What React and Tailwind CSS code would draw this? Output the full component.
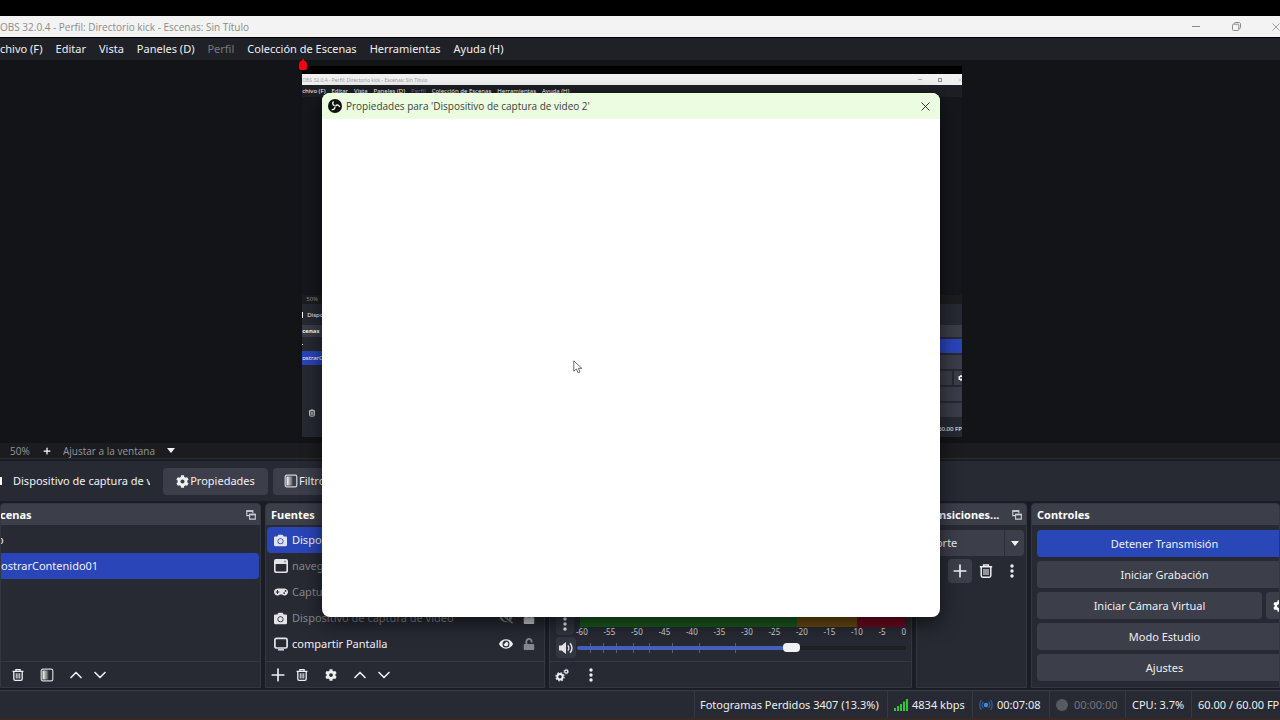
import React, { useState } from "react";
import { FaCamera, FaCog, FaEye, FaEyeSlash, FaGamepad, FaLock, FaUnlock } from "react-icons/fa";
import { ChevronDown, ChevronUp, Plus } from "lucide-react";

const MENU = ["chivo (F)", "Editar", "Vista", "Paneles (D)", "Perfil", "Colección de Escenas", "Herramientas", "Ayuda (H)"];
const DB_MARKS = [-60, -55, -50, -45, -40, -35, -30, -25, -20, -15, -10, -5, 0];
// slider notches, in percent of the track
const NOTCHES = [4, 8, 12, 17, 22, 29, 37, 48];

function TrashIcon({ className = "size-4" }) {
  return (
    <svg viewBox="0 0 16 16" className={className} fill="none" stroke="currentColor" strokeWidth="1.5">
      <path d="M1.8 3.8h12.4M5.6 3.5V1.9h4.8v1.6M3.2 4v8.6c0 1 .6 1.6 1.6 1.6h6.4c1 0 1.6-.6 1.6-1.6V4" />
      <path d="M6 6v6M8 6v6M10 6v6" strokeWidth="1.1" />
    </svg>
  );
}

function FilterIcon({ className = "size-3.5" }) {
  return (
    <svg viewBox="0 0 14 14" className={className}>
      <defs>
        <linearGradient id="fade" x1="0" x2="1">
          <stop offset="0" stopColor="#fff" />
          <stop offset="1" stopColor="#fff" stopOpacity="0.15" />
        </linearGradient>
      </defs>
      <rect x="1.2" y="1.2" width="11.6" height="11.6" rx="1.6" fill="none" stroke="#d4d5da" strokeWidth="1.2" />
      <rect x="2.5" y="2.5" width="6" height="9" fill="url(#fade)" />
    </svg>
  );
}

function DotsIcon() {
  return (
    <svg viewBox="0 0 4 14" className="h-3.5 w-1" fill="currentColor">
      <circle cx="2" cy="2" r="1.7" />
      <circle cx="2" cy="7" r="1.7" />
      <circle cx="2" cy="12" r="1.7" />
    </svg>
  );
}

function PopOutIcon() {
  return (
    <svg viewBox="0 0 10 10" className="size-2.5" fill="none" stroke="#cfd0d6">
      <path d="M3.2 5.6H.8V.8h6v2.4" strokeWidth="1.1" />
      <path d="M.5 1.1h6.6" strokeWidth="1.6" />
      <path d="M3.6 4.2h5.7v4.9H3.6z" strokeWidth="1.1" />
      <path d="M3.2 4.6h6.4" strokeWidth="1.6" />
    </svg>
  );
}

function WindowIcon() {
  return (
    <svg viewBox="0 0 14 14" className="size-3.5">
      <path d="M2 0h10a2 2 0 0 1 2 2v10a2 2 0 0 1-2 2H2a2 2 0 0 1-2-2V2a2 2 0 0 1 2-2zm-.4 5v6.6c0 .5.3.8.8.8h9.2c.5 0 .8-.3.8-.8V5z" fill="currentColor" fillRule="evenodd" />
      <circle cx="11" cy="2.6" r="1" fill="#8a8c95" />
    </svg>
  );
}

function MonitorIcon() {
  return (
    <svg viewBox="0 0 14 14" className="size-3.5" fill="none" stroke="currentColor">
      <rect x="0.9" y="1.4" width="12.2" height="9.6" rx="1.6" strokeWidth="1.7" />
      <path d="M4 12.8h6" strokeWidth="1.4" />
    </svg>
  );
}

function CogsIcon() {
  return (
    <svg viewBox="0 0 14 14" className="size-3.5" fill="none" stroke="currentColor">
      <circle cx="5" cy="8.8" r="2.7" strokeWidth="2" />
      <circle cx="5" cy="8.8" r="4.1" strokeWidth="1.2" strokeDasharray="1.6 1.62" />
      <circle cx="11.2" cy="3.6" r="1.5" strokeWidth="1.2" />
      <circle cx="11.2" cy="3.6" r="2.4" strokeWidth="0.8" strokeDasharray="1 0.9" />
    </svg>
  );
}

function SpeakerIcon() {
  return (
    <svg viewBox="0 0 16 14" className="h-3.5 w-4" fill="none" stroke="currentColor">
      <path d="M1 4.6h2.6L8 1v12L3.6 9.4H1z" fill="currentColor" stroke="none" />
      <path d="M9.8 4.4c1.3 1.4 1.3 3.8 0 5.2M12 2.2c2.6 2.6 2.6 7 0 9.6" strokeWidth="1.5" />
    </svg>
  );
}

function ObsLogo() {
  return (
    <svg viewBox="0 0 24 24" className="size-3.5">
      <circle cx="12" cy="12" r="12" fill="#111" />
      <g fill="none" stroke="#e8ffe0" strokeWidth="2.4">
        <path d="M9.6 4.2c-2.400 2.200-2 6 1.800 7.200" />
        <path d="M9.6 4.2c-2.400 2.200-2 6 1.800 7.200" transform="rotate(120 12 12)" />
        <path d="M9.6 4.2c-2.400 2.200-2 6 1.800 7.200" transform="rotate(240 12 12)" />
      </g>
    </svg>
  );
}

function CloseIcon({ className }) {
  return (
    <svg viewBox="0 0 10 10" className={className} fill="none" stroke="currentColor">
      <path d="M.6.6l8.8 8.8M9.4.6L.6 9.4" />
    </svg>
  );
}

function Caret() {
  return (
    <svg viewBox="0 0 8 5" className="h-[5px] w-2" fill="#f2f2f4">
      <path d="M0 0h8L4 5z" />
    </svg>
  );
}

function TitleBar() {
  return (
    <div className="flex h-[21px] shrink-0 items-center justify-between overflow-hidden bg-[#f3f3f3] font-['Open_Sans',sans-serif] text-[10px] text-[#8b8b8b]">
      <span className="whitespace-nowrap">OBS 32.0.4 - Perfil: Directorio kick - Escenas: Sin Título</span>
      <div className="-mr-4 flex">
        <button aria-label="Minimizar" className="flex h-5 w-10 items-center justify-center">
          <span className="h-px w-2 bg-[#8b8b8b]" />
        </button>
        <button aria-label="Restaurar" className="flex h-5 w-10 items-center justify-center">
          <svg viewBox="0 0 9 9" className="size-[9px]" fill="none" stroke="currentColor">
            <rect x="0.5" y="2.2" width="6.3" height="6.3" rx="1" />
            <path d="M2.3 2V1.5c0-.6.4-1 1-1h3.7c.9 0 1.5.6 1.5 1.5v3.6c0 .6-.4 1-1 1H7" />
          </svg>
        </button>
        <button aria-label="Cerrar" className="flex h-5 w-10 items-center justify-center">
          <CloseIcon className="size-2" />
        </button>
      </div>
    </div>
  );
}

// the captured screen, shown small inside the preview
function MiniScreen() {
  return (
    <div className="relative aspect-video h-full bg-[#15171c] text-[6px] leading-[8px]">
      <svg viewBox="0 0 10 12" className="absolute -top-2 -left-1 h-3 w-2.5" fill="#f00510">
        <path d="M5 0l1 2.5c2 .5 3 2 3 4.5v3q0 2-2 2H3q-2 0-2-2V7c0-2.500 1-4 3-4.500z" />
      </svg>
      <div className="flex h-full flex-col overflow-hidden">
        <div className="h-2 shrink-0 bg-black" />
        <div className="flex h-[11px] shrink-0 items-center justify-between bg-[#f0f0f0] text-[5px] text-[#a0a0a0]">
          <span>OBS 32.0.4 - Perfil: Directorio kick - Escenas: Sin Título</span>
          <div className="flex items-center gap-4">
            <span className="h-px w-1 bg-[#b0b0b0]" />
            <span className="size-1 border border-[#909090]" />
            <CloseIcon className="size-1" />
          </div>
        </div>
        <div className="flex h-3 shrink-0 items-center gap-1.5 bg-[#1d1f25] text-white">
          {MENU.map((m) => (
            <span key={m} className={m === "Perfil" ? "text-[#77797f]" : ""}>{m}</span>
          ))}
        </div>
        <div className="flex-1" />
        <div className="h-[9px] shrink-0 bg-[#1c1d20] pl-1 text-[#8c8d92]">50%</div>
        <div className="flex h-[21px] shrink-0 items-center gap-1 bg-[#262932] text-white">
          <span className="h-1.5 w-px bg-white" />
          Dispositivo
        </div>
        <div className="flex h-24 shrink-0 justify-between bg-[#20222b]">
          <div className="w-32 bg-[#262932]">
            <div className="h-3 bg-[#3a3c47] py-0.5 font-bold text-white">cenas</div>
            <div className="flex h-3.5 items-center">
              <span className="size-px bg-white" />
            </div>
            <div className="flex h-3.5 items-center bg-[#2a44b8] text-white">ostrarContenido01</div>
            <div className="mt-11 pl-1.5 text-white">
              <TrashIcon className="size-2" />
            </div>
          </div>
          <div className="flex w-32 flex-col gap-0.5 bg-[#262932]">
            <div className="h-3 bg-[#3a3c47]" />
            <div className="h-3.5 bg-[#2a44b8]" />
            <div className="h-3.5 bg-[#3a3c47]" />
            <div className="flex h-3.5 justify-end gap-0.5">
              <div className="flex-1 bg-[#3a3c47]" />
              <div className="w-2 overflow-hidden bg-[#3a3c47] py-1 pl-1 text-white">
                <FaCog className="size-1.5" />
              </div>
            </div>
            <div className="h-3.5 bg-[#3a3c47]" />
            <div className="h-3.5 bg-[#3a3c47]" />
          </div>
        </div>
        <div className="h-4 shrink-0 bg-[#262932] py-1 text-right text-white">60.00 FP</div>
      </div>
    </div>
  );
}

function Dock({ title, popOut, children, footer }) {
  return (
    <section className="flex min-w-0 flex-col overflow-hidden rounded-t-sm border border-[#343742] bg-[#272a33]">
      <header className="flex h-[21px] shrink-0 items-center justify-between bg-[#3c3e4a] pr-1 pl-[5px]">
        <h2 className="font-bold whitespace-nowrap text-white">{title}</h2>
        {popOut && (
          <button aria-label="Desacoplar panel">
            <PopOutIcon />
          </button>
        )}
      </header>
      <div className="min-h-0 flex-1">{children}</div>
      {footer && <footer className="flex h-[26px] shrink-0 items-center border-t border-[#343742] text-[#eeeef1]">{footer}</footer>}
    </section>
  );
}

function ToolButton({ label, className = "w-6", children }) {
  return (
    <button aria-label={label} className={`flex h-6 items-center justify-center rounded-sm ${className}`}>
      {children}
    </button>
  );
}

const SOURCES = [
  { name: "Dispositivo de captura de video 2", icon: <FaCamera className="size-[13px]" />, on: true, selected: true },
  { name: "navegador", icon: <WindowIcon /> },
  { name: "Captura de juego", icon: <FaGamepad className="size-3.5" /> },
  { name: "Dispositivo de captura de video", icon: <FaCamera className="size-[13px]" />, locked: true },
  { name: "compartir Pantalla", icon: <MonitorIcon />, on: true },
];

function Sources() {
  return (
    <ul className="px-px pt-0.5">
      {SOURCES.map((s) => (
        <li
          key={s.name}
          className={`flex h-[26px] items-center rounded-sm pr-2 pl-[7px] ${s.selected ? "bg-[#2a45b8]" : ""} ${s.on ? "text-[#f0f0f3]" : "text-[#85878f]"}`}
        >
          <span className="flex w-[18px] shrink-0 text-[#e4e4e8]">{s.icon}</span>
          <span className="flex-1 truncate">{s.name}</span>
          <button aria-label="Visibilidad" className="mr-2.5">
            {s.on ? <FaEye className="size-3.5" /> : <FaEyeSlash className="size-3.5" />}
          </button>
          <button aria-label="Bloquear">
            {s.locked ? <FaLock className="size-3 text-[#d0d1d6]" /> : <FaUnlock className="size-3 text-[#85878f]" />}
          </button>
        </li>
      ))}
    </ul>
  );
}

function Mixer() {
  const [volume, setVolume] = useState(66);
  return (
    <div className="flex h-full flex-col justify-end pr-[5px] pl-1.5">
      <div className="mb-px flex gap-1.5">
        <button aria-label="Opciones de audio" className="flex h-10 w-[18px] shrink-0 items-end justify-center rounded-sm bg-[#323540] pb-1 text-[#eeeef1]">
          <DotsIcon />
        </button>
        <div className="flex-1">
          <div className="flex h-8 flex-col justify-end">
            <div className="flex h-3 border-t border-[#12330f]">
              <div className="w-2/3 bg-[#1b5a1e]" />
              <div className="flex-1 bg-[#6b4a10]" />
              <div className="w-[15%] bg-[#700a20]" />
            </div>
          </div>
          <div className="-ml-1 flex justify-between text-[8px] leading-[9px] text-[#d6d7db]">
            {DB_MARKS.map((d) => (
              <span key={d}>{d}</span>
            ))}
          </div>
        </div>
      </div>
      <div className="mb-[3px] flex items-center gap-px">
        <button aria-label="Silenciar" className="flex h-[21px] w-5 shrink-0 items-center justify-center rounded-sm bg-[#343741] text-[#e4e4e8]">
          <SpeakerIcon />
        </button>
        <div className="relative flex h-4 flex-1 items-center">
          {NOTCHES.map((n) => (
            <span key={n} className="absolute h-2.5 w-px bg-[#5b5f70]" style={{ left: `${n}%` }} />
          ))}
          <div className="absolute inset-x-0 h-1 rounded-full bg-[#1e2028]">
            <div className="h-full rounded-full bg-[#4460bd]" style={{ width: `${volume}%` }} />
          </div>
          <input
            type="range"
            aria-label="Volumen"
            value={volume}
            onChange={(e) => setVolume(Number(e.target.value))}
            className="relative h-4 w-full appearance-none bg-transparent [&::-webkit-slider-thumb]:h-[9px] [&::-webkit-slider-thumb]:w-[17px] [&::-webkit-slider-thumb]:appearance-none [&::-webkit-slider-thumb]:rounded [&::-webkit-slider-thumb]:bg-[#f1f1f3]"
          />
        </div>
      </div>
    </div>
  );
}

function ControlButton({ children, primary }) {
  return (
    <button className={`h-[27px] w-full rounded-sm text-[#eeeef1] ${primary ? "bg-[#2a47b8]" : "bg-[#3c3e4a]"}`}>
      {children}
    </button>
  );
}

function StatusBar() {
  return (
    <footer className="flex h-7 shrink-0 items-stretch justify-end overflow-hidden border-t border-[#3a3d48] bg-[#272a33] whitespace-nowrap text-[#eeeef1] *:flex *:shrink-0 *:items-center *:border-l *:border-[#363944]">
      <div className="w-[193px] pl-[5px]">Fotogramas Perdidos 3407 (13.3%)</div>
      <div className="w-[85px] gap-1 pl-1.5">
        <svg viewBox="0 0 14 12" className="h-3 w-3.5" fill="#2fc832">
          <path d="M0 9h2v3H0zM3 7h2v5H3zM6 5h2v7H6zM9 2.5h2V12H9zM12 0h2v12h-2z" />
        </svg>
        4834 kbps
      </div>
      <div className="w-[77px] gap-1 pl-1.5">
        <svg viewBox="0 0 14 12" className="h-3 w-3.5" fill="none" stroke="#2b62a8" strokeWidth="1.2">
          <circle cx="7" cy="6" r="2.2" fill="#3f8be0" stroke="none" />
          <path d="M4.4 3c-1.5 1.7-1.5 4.3 0 6M9.6 3c1.5 1.7 1.5 4.3 0 6M2.4 1.2c-2.200 2.600-2.200 7 0 9.600M11.6 1.2c2.200 2.600 2.200 7 0 9.600" />
        </svg>
        00:07:08
      </div>
      <div className="w-[76px] gap-1.5 pl-1.5 text-[#74767e]">
        <span className="size-3 rounded-full bg-[#585a62]" />
        00:00:00
      </div>
      <div className="w-[66px] pl-1.5">CPU: 3.7%</div>
      <div className="w-[89px] pl-1.5">60.00 / 60.00 FP</div>
    </footer>
  );
}

function PropertiesDialog() {
  return (
    <div
      role="dialog"
      aria-labelledby="dialog-title"
      className="absolute top-[93px] left-[322px] flex h-[524px] w-[618px] flex-col overflow-hidden rounded-lg bg-white shadow-[0_6px_20px_rgba(0,0,0,0.6)]"
    >
      <div className="flex h-[26px] items-center gap-1 bg-[#ebfce0] pr-2.5 pl-1.5 font-['Open_Sans',sans-serif] text-[10px] text-[#3c443a]">
        <ObsLogo />
        <h1 id="dialog-title" className="flex-1">Propiedades para 'Dispositivo de captura de video 2'</h1>
        <button aria-label="Cerrar">
          <CloseIcon className="size-[9px] text-[#222]" />
        </button>
      </div>
      <div className="flex-1" />
    </div>
  );
}

export default function App() {
  return (
    <div className="relative flex h-screen flex-col overflow-hidden bg-[#1b1d26] font-['Noto_Sans','Open_Sans',sans-serif] text-[11px] leading-4">
      <div className="h-4 shrink-0 bg-black" />
      <TitleBar />
      <nav className="flex h-[23px] shrink-0 items-center gap-[13px] border-t border-black bg-[#1f2126] whitespace-nowrap text-[#f0f0f3]">
        {MENU.map((m) => (
          <button key={m} className={m === "Perfil" ? "text-[#77797f]" : ""}>{m}</button>
        ))}
      </nav>

      <main className="flex min-h-0 flex-1 justify-center bg-[#131418] py-1.5 pr-4">
        <MiniScreen />
      </main>

      <div className="flex h-4 shrink-0 items-center border-b border-[#2c2d30] bg-[#1b1c1f] pl-2.5 font-['Open_Sans',sans-serif] text-[10px] text-[#96979c]">
        <span className="w-8">50%</span>
        <button aria-label="Acercar" className="w-[21px] text-white">
          <Plus className="size-2.5" strokeWidth={3} />
        </button>
        <div className="relative flex items-center">
          <select aria-label="Escala" className="w-28 appearance-none bg-transparent">
            <option>Ajustar a la ventana</option>
          </select>
          <span className="pointer-events-none absolute right-0">
            <Caret />
          </span>
        </div>
      </div>

      <div className="mt-0.5 flex h-10 shrink-0 items-center bg-[#272a33] text-[#f0f0f3]">
        <span className="h-2 w-0.5 bg-white" />
        <span className="ml-[11px] w-[137px] overflow-hidden whitespace-nowrap">Dispositivo de captura de v</span>
        <button className="ml-[13px] flex h-[27px] w-[105px] items-center justify-center gap-px rounded-sm bg-[#3c3e4a]">
          <FaCog className="size-[13px]" />
          Propiedades
        </button>
        <button className="ml-[5px] flex h-[27px] w-20 items-center gap-px rounded-sm bg-[#3c3e4a] pl-[11px]">
          <FilterIcon />
          Filtros
        </button>
      </div>

      <div className="mt-0.5 mb-0.5 grid h-[185px] shrink-0 grid-cols-[261px_280px_1fr_111px_249px] gap-1">
        <Dock
          title={<span className="-ml-1.5">cenas</span>}
          popOut
          footer={
            <>
              <ToolButton label="Eliminar escena" className="ml-[5px] w-6"><TrashIcon className="size-3.5" /></ToolButton>
              <ToolButton label="Filtros de escena" className="ml-[5px] w-6"><FilterIcon className="size-3.5" /></ToolButton>
              <ToolButton label="Subir escena" className="ml-[5px] w-6"><ChevronUp className="size-5" /></ToolButton>
              <ToolButton label="Bajar escena"><ChevronDown className="size-5" /></ToolButton>
            </>
          }
        >
          <ul className="pt-0.5 text-[#f0f0f3]">
            <li className="flex h-[26px] items-center">
              <span className="-ml-1">o</span>
            </li>
            <li className="mr-px flex h-[26px] items-center rounded-r-sm bg-[#2a45b8]">ostrarContenido01</li>
          </ul>
        </Dock>

        <Dock
          title="Fuentes"
          popOut
          footer={
            <>
              <ToolButton label="Añadir fuente"><Plus className="size-5" /></ToolButton>
              <ToolButton label="Eliminar fuente"><TrashIcon className="size-3.5" /></ToolButton>
              <ToolButton label="Propiedades de fuente" className="ml-[5px] w-6"><FaCog className="size-3" /></ToolButton>
              <ToolButton label="Subir fuente" className="ml-[5px] w-6"><ChevronUp className="size-5" /></ToolButton>
              <ToolButton label="Bajar fuente"><ChevronDown className="size-5" /></ToolButton>
            </>
          }
        >
          <Sources />
        </Dock>

        <Dock
          title="Mezclador de audio"
          popOut
          footer={
            <>
              <ToolButton label="Audio avanzado"><CogsIcon /></ToolButton>
              <ToolButton label="Menú del mezclador" className="ml-[5px] w-6"><DotsIcon /></ToolButton>
            </>
          }
        >
          <Mixer />
        </Dock>

        <Dock title="Transiciones..." popOut>
          <div className="flex flex-col gap-[3px] pt-[5px] pr-0.5 text-[#eeeef1]">
            <div className="relative flex">
              <select aria-label="Transición" className="h-[26px] w-full appearance-none rounded-sm bg-[#3c3e4a] pl-3">
                <option>Corte</option>
              </select>
              <span className="pointer-events-none absolute inset-y-0 right-0 flex w-5 items-center justify-center border-l border-[#2c2e38]">
                <Caret />
              </span>
            </div>
            <div className="flex justify-end gap-0.5">
              <ToolButton label="Añadir transición" className="w-6 bg-[#3c3e4a]"><Plus className="size-5" /></ToolButton>
              <ToolButton label="Eliminar transición"><TrashIcon /></ToolButton>
              <ToolButton label="Opciones de transición"><DotsIcon /></ToolButton>
            </div>
          </div>
        </Dock>

        <Dock title="Controles">
          <div className="flex w-[260px] flex-col gap-1 pt-[5px] pl-[5px]">
            <ControlButton primary>Detener Transmisión</ControlButton>
            <ControlButton>Iniciar Grabación</ControlButton>
            <div className="flex gap-1">
              <ControlButton>Iniciar Cámara Virtual</ControlButton>
              <button aria-label="Configurar cámara" className="flex h-[27px] w-[26px] shrink-0 items-center justify-center rounded-sm bg-[#3c3e4a] text-white">
                <FaCog className="size-3" />
              </button>
            </div>
            <ControlButton>Modo Estudio</ControlButton>
            <ControlButton>Ajustes</ControlButton>
          </div>
        </Dock>
      </div>

      <StatusBar />
      <div className="h-0.5 shrink-0 bg-[#3a2823]" />

      <PropertiesDialog />

      {/* mouse pointer */}
      <svg viewBox="0 0 10 14" className="absolute top-[360px] left-[573px] h-3.5 w-2.5" fill="#fff" stroke="#444" strokeWidth="0.8">
        <path d="M.8.8v10.400l2.600-2.200 1.700 3.800 1.900-.8-1.700-3.700h3.500z" />
      </svg>
    </div>
  );
}
